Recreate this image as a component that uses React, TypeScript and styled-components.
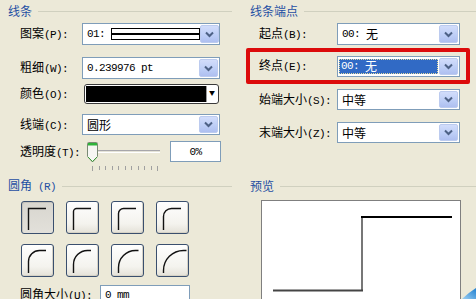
import * as React from 'react';
import styled, {createGlobalStyle} from 'styled-components';

const GlobalStyle = createGlobalStyle`
  html, body {
    margin: 0;
    padding: 0;
    background: #ece9d8;
  }
  body {
    font-family: "Noto Sans CJK SC", "Liberation Sans", sans-serif;
    font-size: 12px;
    color: #000;
  }
`;

const Page = styled.div`
  position: relative;
  width: 476px;
  height: 299px;
  overflow: hidden;
  display: grid;
  grid-template-columns: 238px 238px;
  grid-template-rows: 175px 1fr;
  background: #ece9d8;
`;

const Section = styled.section`
  display: flex;
  flex-direction: column;
  min-width: 0;
`;

const Legend = styled.div<{$left: number; $right: number}>`
  display: flex;
  align-items: center;
  gap: 6px;
  height: 22px;
  padding: 0 ${p => p.$right}px 0 ${p => p.$left}px;
  color: #1f4fa3;
  line-height: 1;
  white-space: nowrap;
  &::after {
    content: '';
    flex: 1;
    height: 1px;
    background: #d0d0bf;
  }
`;

const Row = styled.div<{$top: number; $h: number; $pad: number}>`
  display: flex;
  align-items: center;
  margin-top: ${p => p.$top}px;
  height: ${p => p.$h}px;
  padding-left: ${p => p.$pad}px;
`;

const Label = styled.span<{$w: number}>`
  flex: 0 0 auto;
  width: ${p => p.$w}px;
  line-height: 1;
  white-space: nowrap;
`;

// half-width latin text, like the dialog's bitmap font
const Mono = styled.span`
  font-family: "Liberation Mono", monospace;
  font-size: 11px;
  letter-spacing: -0.6px;
  white-space: pre;
`;

const Combo = styled.div<{$w: number}>`
  box-sizing: border-box;
  display: flex;
  align-items: stretch;
  width: ${p => p.$w}px;
  height: 100%;
  border: 1px solid #7f9db9;
  background: #fff;
  padding: 1px;
`;

const ComboText = styled.div<{$selected?: boolean}>`
  flex: 1;
  display: flex;
  align-items: center;
  padding-left: ${p => (p.$selected ? 1 : 3)}px;
  margin: ${p => (p.$selected ? '1px 1px 1px 0' : '0')};
  background: ${p => (p.$selected ? '#316ac5' : 'transparent')};
  color: ${p => (p.$selected ? '#fff' : '#000')};
  border: ${p => (p.$selected ? '1px dotted #e4dca0' : 'none')};
  line-height: 1;
  white-space: nowrap;
`;

const ArrowButton = styled.div`
  flex: 0 0 17px;
  display: flex;
  align-items: center;
  justify-content: center;
  border-radius: 2px;
  border: 1px solid #bccbef;
  background: linear-gradient(#d2ddfb, #bccdf6 60%, #aebff0);
`;

const PatternBox = styled.div`
  box-sizing: border-box;
  width: 89px;
  height: 12px;
  border: 1px solid #000;
  display: flex;
  align-items: center;
  &::before {
    content: '';
    flex: 1;
    height: 2px;
    background: #000;
  }
`;

const ColorCombo = styled.div`
  box-sizing: border-box;
  display: flex;
  width: 135px;
  height: 100%;
  margin-left: 2px;
  border: 1px solid #3a3a3a;
  border-radius: 3px;
  padding: 1px;
  background: #fff;
`;

const ColorFill = styled.div`
  flex: 1;
  background: #000;
`;

const ColorArrow = styled.div`
  flex: 0 0 10px;
  display: flex;
  align-items: flex-start;
  justify-content: center;
  padding-top: 4px;
  border-left: 1px solid #9a9a9a;
  font-size: 6px;
  line-height: 1;
`;

const Slider = styled.div`
  position: relative;
  display: flex;
  align-items: center;
  width: 73px;
  height: 100%;
  margin-left: 5px;
`;

const Track = styled.div`
  box-sizing: border-box;
  margin-left: 5px;
  flex: 1;
  height: 3px;
  border-top: 1px solid #a7a6aa;
  border-bottom: 1px solid #fff;
  background: #e4e2d7;
`;

const Thumb = styled.svg`
  position: absolute;
  left: 0;
  top: 1px;
`;

const Ticks = styled.div`
  display: flex;
  justify-content: space-between;
  width: 66px;
  height: 5px;
  margin: 4px 0 0 92px;
  & > i {
    width: 1px;
    height: 4px;
    background: #a0a0a0;
  }
  & > i:first-child,
  & > i:last-child {
    height: 5px;
  }
`;

const TextBox = styled.div<{$w: number; $center?: boolean}>`
  box-sizing: border-box;
  display: flex;
  align-items: center;
  justify-content: ${p => (p.$center ? 'center' : 'flex-start')};
  width: ${p => p.$w}px;
  height: 100%;
  padding-left: ${p => (p.$center ? 0 : 4)}px;
  border: 1px solid #7f9db9;
  background: #fff;
`;

const Highlight = styled.div`
  box-sizing: border-box;
  display: flex;
  align-items: center;
  width: 224px;
  height: 36px;
  margin: 3px 0 0 8px;
  border: 4px solid #dc0b0b;
  border-radius: 2px;
  padding: 0 6px 0 9px;
`;

const CornerGrid = styled.div`
  display: grid;
  grid-template-columns: repeat(4, 33px);
  grid-auto-rows: 33px;
  column-gap: 12px;
  row-gap: 10px;
  margin: 4px 0 0 21px;
`;

const CornerButton = styled.div<{$active?: boolean}>`
  box-sizing: border-box;
  border: 1px solid #3a4f6e;
  border-radius: 3px;
  background: ${p =>
    p.$active
      ? 'linear-gradient(#d8d6cf, #e2e0da)'
      : 'linear-gradient(#fefefe, #f4f3ee 70%, #e4e1d8)'};
  box-shadow: ${p => (p.$active ? 'inset 1px 1px 0 #c4c2bb' : 'inset -1px -1px 0 #d6d2c6')};
`;

const Preview = styled.div`
  box-sizing: border-box;
  width: 200px;
  height: 110px;
  margin: 3px 0 0 23px;
  background: #fff;
  border: 1px solid #7f7f7f;
`;

const Swoosh = styled.svg`
  position: absolute;
  right: 0;
  bottom: 0;
`;

const Chevron = () => (
  <svg width='9' height='7' viewBox='0 0 9 7'>
    <path d='M1 1.5 L4.5 5 L8 1.5' fill='none' stroke='#4d6185' strokeWidth='2' />
  </svg>
);

const Dropdown = ({w, selected, children}: {w: number; selected?: boolean; children: React.ReactNode}) => (
  <Combo $w={w}>
    <ComboText $selected={selected}>{children}</ComboText>
    <ArrowButton>
      <Chevron />
    </ArrowButton>
  </Combo>
);

const CornerIcon = ({r}: {r: number}) => {
  const x = 6.5;
  const y = r > 8 ? 5.5 : 6.5;
  const d = r === 0
    ? `M${x} 28 V${y} H24`
    : `M${x} 28 V${y + r} A${r} ${r} 0 0 1 ${x + r} ${y} H${Math.max(24, x + r + 3)}`;
  return (
    <svg width='31' height='31' viewBox='0 0 31 31'>
      <path d={d} fill='none' stroke='#111' strokeWidth='1.4' />
    </svg>
  );
};

const radii = [0, 3, 5, 8, 11, 14, 17, 20];

export default function App() {
  return (
    <Page>
      <GlobalStyle />

      <Section>
        <Legend $left={8} $right={6}>线条</Legend>
        <Row $top={1} $h={22} $pad={20}>
          <Label $w={62}>图案<Mono>(P):</Mono></Label>
          <Dropdown w={138}>
            <Mono>01: </Mono>
            <PatternBox />
          </Dropdown>
        </Row>
        <Row $top={12} $h={22} $pad={20}>
          <Label $w={62}>粗细<Mono>(W):</Mono></Label>
          <Dropdown w={138}>
            <Mono>0.239976 pt</Mono>
          </Dropdown>
        </Row>
        <Row $top={5} $h={20} $pad={20}>
          <Label $w={62}>颜色<Mono>(O):</Mono></Label>
          <ColorCombo>
            <ColorFill />
            <ColorArrow>▼</ColorArrow>
          </ColorCombo>
        </Row>
        <Row $top={10} $h={21} $pad={20}>
          <Label $w={62}>线端<Mono>(C):</Mono></Label>
          <Dropdown w={138}>圆形</Dropdown>
        </Row>
        <Row $top={6} $h={21} $pad={20}>
          <Label $w={62}>透明度<Mono>(T):</Mono></Label>
          <Slider>
            <Track />
            <Thumb width='11' height='21' viewBox='0 0 11 21'>
              <path d='M0.5 1.5 Q0.5 0.5 1.5 0.5 H9.5 Q10.5 0.5 10.5 1.5 V14.5 L5.5 20 L0.5 14.5 Z' fill='#f6f6f3' stroke='#7a8a74' />
              <rect x='1' y='1' width='9' height='2.5' fill='#2fb33a' />
              <path d='M1 15 L5.5 19.5 L10 15' fill='none' stroke='#3e9b3a' />
            </Thumb>
          </Slider>
          <div style={{width: 10}} />
          <TextBox $w={51} $center>
            <Mono>0%</Mono>
          </TextBox>
        </Row>
        <Ticks>
          {Array.from({length: 11}).map((_, i) => (
            <i key={i} />
          ))}
        </Ticks>
      </Section>

      <Section>
        <Legend $left={12} $right={0}>线条端点</Legend>
        <Row $top={1} $h={22} $pad={21}>
          <Label $w={78}>起点<Mono>(B):</Mono></Label>
          <Dropdown w={123}>
            <Mono>00: </Mono>无
          </Dropdown>
        </Row>
        <Highlight>
          <Label $w={78}>终点<Mono>(E):</Mono></Label>
          <Row $top={0} $h={21} $pad={0}>
            <Dropdown w={123} selected>
              <Mono>00: </Mono>无
            </Dropdown>
          </Row>
        </Highlight>
        <Row $top={5} $h={21} $pad={21}>
          <Label $w={78}>始端大小<Mono>(S):</Mono></Label>
          <Dropdown w={123}>中等</Dropdown>
        </Row>
        <Row $top={12} $h={21} $pad={21}>
          <Label $w={78}>末端大小<Mono>(Z):</Mono></Label>
          <Dropdown w={123}>中等</Dropdown>
        </Row>
      </Section>

      <Section>
        <Legend $left={8} $right={6}><span>圆角<Mono> (R)</Mono></span></Legend>
        <CornerGrid>
          {radii.map((r, i) => (
            <CornerButton key={r} $active={i === 0}>
              <CornerIcon r={r} />
            </CornerButton>
          ))}
        </CornerGrid>
        <Row $top={8} $h={20} $pad={20}>
          <Label $w={80}>圆角大小<Mono>(U):</Mono></Label>
          <TextBox $w={90}>
            <Mono>0 mm</Mono>
          </TextBox>
        </Row>
      </Section>

      <Section>
        <Legend $left={12} $right={0}>预览</Legend>
        <Preview>
          <svg width='198' height='108' viewBox='0 0 198 108'>
            <path d='M100 90 V16' stroke='#777' strokeWidth='2' />
            <path d='M99 16 H190' stroke='#000' strokeWidth='2' />
            <path d='M11 89.5 H101' stroke='#444' strokeWidth='2' />
          </svg>
        </Preview>
      </Section>

      <Swoosh width='14' height='14' viewBox='0 0 14 14'>
        <defs>
          <linearGradient id='sw' x1='0' y1='1' x2='1' y2='0'>
            <stop offset='0' stopColor='#9fd0f2' />
            <stop offset='1' stopColor='#1e7fd0' />
          </linearGradient>
        </defs>
        <path d='M0 14 Q6 8 14 3 V14 Z' fill='url(#sw)' />
      </Swoosh>
    </Page>
  );
}
